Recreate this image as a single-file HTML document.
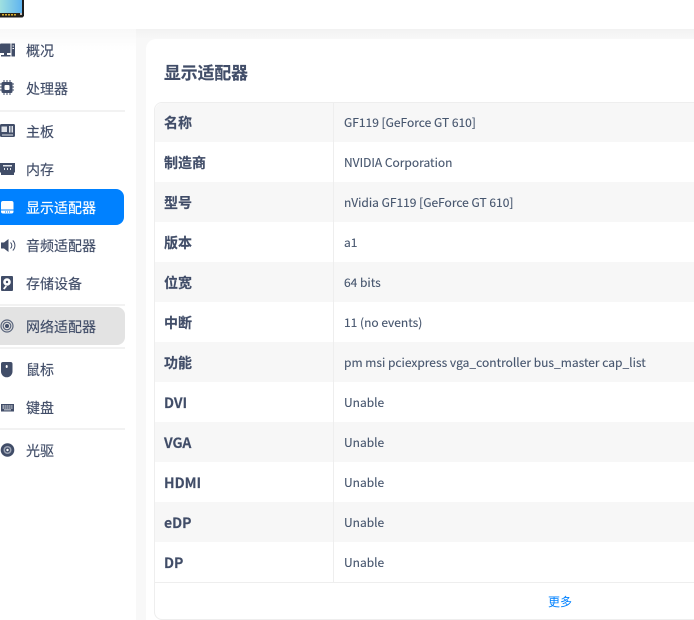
<!DOCTYPE html>
<html><head><meta charset="utf-8"><style>
html,body{margin:0;padding:0;width:694px;height:620px;overflow:hidden;background:#fff}
body{font-family:"Noto Sans CJK SC","Liberation Sans",sans-serif;color:#414d68;position:relative}
div{position:absolute;box-sizing:border-box}
.top{left:0;top:0;width:694px;height:29px;background:#fff}
.side{left:0;top:29px;width:136px;height:591px;background:linear-gradient(#f8f8f8,#fff 22px)}
.main{left:136px;top:29px;width:558px;height:591px;background:linear-gradient(#f2f2f2,#f8f8f8 10px)}
.card{left:146px;top:39px;width:600px;height:600px;background:#fff;border-radius:10px}
.t{left:26px;font-size:14px;line-height:20px;white-space:nowrap;-webkit-text-stroke:.15px currentColor}
.sep{left:0;width:125px;height:2px;background:#f2f2f2}
.sel{left:0;top:189px;width:124px;height:36px;background:#0081ff;border-radius:0 8px 8px 0}
.hov{left:0;top:307px;width:125px;height:38px;background:#e3e3e3;border-radius:0 8px 8px 0}
svg{position:absolute;left:0}
h1{position:absolute;margin:0;left:164px;top:60px;font-size:16.8px;line-height:24px;font-weight:700;color:#414d68;-webkit-text-stroke:.15px currentColor}
.tb{left:154px;top:102px;width:560px;height:518px;border:1px solid #eee;border-radius:8px}
.r{left:155px;width:539px;height:40px}
.r.a{background:#f7f7f7}
.k{left:164px;font-size:14px;font-weight:700;line-height:20px;white-space:nowrap;-webkit-text-stroke:.15px currentColor}
.v{left:344px;font-size:12px;line-height:20px;white-space:nowrap;color:#47566e;-webkit-text-stroke:.12px currentColor}
.col{left:333px;top:102px;width:1px;height:480px;background:#eee}
.bot{left:155px;top:582px;width:539px;height:1px;background:#eee}
.more{left:548px;top:592px;font-size:12px;line-height:20px;color:#0081ff}
</style></head><body>
<div class="top"></div>
<svg style="top:0" width="24" height="18" viewBox="0 0 24 18"><defs><linearGradient id="g" x1="0" y1="0" x2="1" y2="0"><stop offset="0" stop-color="#9fe0e0"/><stop offset="1" stop-color="#5fb4f0"/></linearGradient></defs><path d="M0 0h24v16l-1.500 1.500H0z" fill="#1d1d1d"/><rect x="0" y="0" width="22" height="13" fill="url(#g)"/><rect x="0" y="13" width="22" height="3" fill="#2a2418"/><path d="M2 14h2v1.500H2zM5 14h2v1.500H5zM8 14h2v1.500H8zM11 14h2v1.500h-2zM14 14h2v1.500h-2z" fill="#d8ae30"/><rect x="20" y="13" width="2" height="2" fill="#bbb"/></svg>
<div class="side"></div>
<div class="main"></div>
<div class="card"></div>

<div class="sel"></div><div class="hov"></div>
<div class="sep" style="top:110px"></div>
<div class="sep" style="top:304px"></div>
<div class="sep" style="top:347px"></div>
<div class="sep" style="top:428px"></div>

<svg style="top:43px" width="16" height="14"><path d="M0 1.500a1 1 0 0 1 1-1h9.500V10H7v2h3.500v1.500H1V12h3v-2H0z" fill="#414d68"/><path d="M11.500.5h3.500v13h-3.500z" fill="#414d68"/><path d="M12.500 2.500h1.500v1h-1.500zM12.500 5h1.500v1h-1.500z" fill="#fff"/></svg>
<svg style="top:80px" width="15" height="15"><path d="M3.500 0h1v2h-1zM6.500 0h1v2h-1zM9.500 0h1v2h-1zM3.500 13h1v2h-1zM6.500 13h1v2h-1zM9.500 13h1v2h-1zM0 3.500h2v1H0zM0 6.500h2v1H0zM0 9.500h2v1H0zM12 3.500h2v1h-2zM12 6.500h2v1h-2zM12 9.500h2v1h-2z" fill="#414d68"/><rect x="1.500" y="2" width="11" height="11" rx="1.500" fill="#414d68"/><rect x="4.500" y="5" width="5" height="5" rx="1" fill="#fff"/></svg>
<svg style="top:124px" width="15" height="14"><rect width="15" height="13" rx="1.500" fill="#414d68"/><path d="M1.500 2.500h5.500v5.500H1.500zM9 2h1.500v6.500H9zM11.500 2h1.500v6.500h-1.500zM2 10.500h11v1H2z" fill="#dfe2e8"/></svg>
<svg style="top:163px" width="15" height="12"><path d="M0 0h15v9.500h-1V12H1V9.500H0z" fill="#414d68"/><path d="M3 2h9v1.500H3zM4 5h1v2H4zM7 5h1v2H7zM10 5h1v2h-1z" fill="#dfe2e8"/></svg>
<svg style="top:201px" width="14" height="13"><path d="M3 0h8.500a2 2 0 0 1 2 2v6.500H1V2a2 2 0 0 1 2-2zM1 9.500h12.500V10.500a2 2 0 0 1-2 2H3a2 2 0 0 1-2-2z" fill="#fff"/><path d="M5 10.500h1v1H5zM7 10.500h1v1H7zM9 10.500h1v1H9z" fill="#0081ff"/></svg>
<svg style="top:239px" width="16" height="13"><path d="M1 3.500h3L8.500 0v13L4 9.500H1z" fill="#414d68"/><path d="M10.500 3.500a4 4 0 0 1 0 6M12.800 1.500a7 7 0 0 1 0 10" fill="none" stroke="#414d68" stroke-width="1"/></svg>
<svg style="top:276px" width="14" height="15"><rect x="1" width="12" height="15" rx="1" fill="#414d68"/><circle cx="7" cy="6" r="3.800" fill="#fff"/><circle cx="7" cy="6" r="1.200" fill="#414d68"/><path d="M3 12.500l2.500-3 1.500 1-2.500 3z" fill="#fff"/></svg>
<svg style="top:319px" width="15" height="15" fill="none" stroke="#414d68"><circle cx="7" cy="7" r="6" stroke-width="1.200" opacity=".85"/><circle cx="7" cy="7" r="3.800" stroke-width="1.200" opacity=".85"/><circle cx="7" cy="7" r="2" fill="#414d68" stroke="none"/></svg>
<svg style="top:362px" width="14" height="16"><path d="M3 0h7.500a2 2 0 0 1 2 2v7.500a5.750 5.750 0 0 1-11.500 0V2a2 2 0 0 1 2-2z" fill="#414d68"/><rect x="5.700" y="3" width="2" height="3" rx="1" fill="#fff"/></svg>
<svg style="top:404px" width="15" height="8"><rect x="1" width="13" height="7.500" fill="#414d68"/><path d="M2.500 1.500h10v1h-10zM2.500 3.500h10v1h-10zM4 5.500h7v.8H4z" fill="#fff"/><path d="M4.500 1.500h.7v3h-.7zM6.500 1.500h.7v3h-.7zM8.500 1.500h.7v3h-.7zM10.500 1.500h.7v3h-.7z" fill="#414d68"/></svg>
<svg style="top:443px" width="15" height="15"><circle cx="7.500" cy="7" r="6.800" fill="#414d68"/><circle cx="7.500" cy="7" r="4" fill="#9aa2b3"/><circle cx="7.500" cy="7" r="2.500" fill="#414d68"/><circle cx="7.500" cy="7" r="1.200" fill="#fff"/></svg>

<div class="t" style="top:41px">概况</div>
<div class="t" style="top:79px">处理器</div>
<div class="t" style="top:122px">主板</div>
<div class="t" style="top:160px">内存</div>
<div class="t" style="top:198px;color:#fff">显示适配器</div>
<div class="t" style="top:236px">音频适配器</div>
<div class="t" style="top:274px">存储设备</div>
<div class="t" style="top:317px">网络适配器</div>
<div class="t" style="top:360px">鼠标</div>
<div class="t" style="top:398px">键盘</div>
<div class="t" style="top:441px">光驱</div>

<h1>显示适配器</h1>
<div class="tb"></div>
<div class="r a" style="top:103px;height:39px;border-top-left-radius:8px"></div>
<div class="r a" style="top:182px"></div>
<div class="r a" style="top:262px"></div>
<div class="r a" style="top:342px"></div>
<div class="r a" style="top:422px"></div>
<div class="r a" style="top:502px"></div>
<div class="col"></div><div class="bot"></div>

<div class="k" style="top:113px">名称</div><div class="v" style="top:113px">GF119 [GeForce GT 610]</div>
<div class="k" style="top:153px">制造商</div><div class="v" style="top:153px">NVIDIA Corporation</div>
<div class="k" style="top:193px">型号</div><div class="v" style="top:193px">nVidia GF119 [GeForce GT 610]</div>
<div class="k" style="top:233px">版本</div><div class="v" style="top:233px">a1</div>
<div class="k" style="top:273px">位宽</div><div class="v" style="top:273px">64 bits</div>
<div class="k" style="top:313px">中断</div><div class="v" style="top:313px">11 (no events)</div>
<div class="k" style="top:353px">功能</div><div class="v" style="top:353px">pm msi pciexpress vga_controller bus_master cap_list</div>
<div class="k" style="top:393px">DVI</div><div class="v" style="top:393px">Unable</div>
<div class="k" style="top:433px">VGA</div><div class="v" style="top:433px">Unable</div>
<div class="k" style="top:473px">HDMI</div><div class="v" style="top:473px">Unable</div>
<div class="k" style="top:513px">eDP</div><div class="v" style="top:513px">Unable</div>
<div class="k" style="top:553px">DP</div><div class="v" style="top:553px">Unable</div>
<div class="more">更多</div>
</body></html>
